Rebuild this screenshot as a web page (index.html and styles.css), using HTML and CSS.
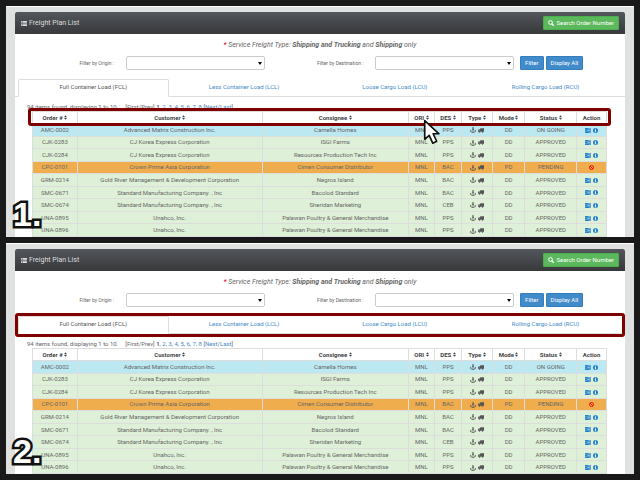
FILE: index.html
```html
<!DOCTYPE html>
<html lang="en">
<head>
<meta charset="utf-8">
<title>Freight Plan List</title>
<link rel="stylesheet" href="styles.css">
</head>
<body>
<svg class="defs" aria-hidden="true">
  <symbol id="list" viewBox="0 0 14 12"><path d="M0 0h3v2.4H0zM4 0h10v2.4H4zM0 3.2h3v2.4H0zM4 3.2h10v2.4H4zM0 6.4h3v2.4H0zM4 6.4h10v2.4H4zM0 9.6h3V12H0zM4 9.6h10V12H4z"/></symbol>
  <symbol id="search" viewBox="0 0 12 12"><circle cx="5" cy="5" r="3.8" fill="none" stroke="currentColor" stroke-width="2"/><path d="M8 8l3 3" stroke="currentColor" stroke-width="2.4" stroke-linecap="round"/></symbol>
  <symbol id="sort" viewBox="0 0 8 12"><path d="M4 0l4 5H0zM4 12l4-5H0z"/></symbol>
  <symbol id="anchor" viewBox="0 0 14 14"><path d="M7 4v9M4.500 6h5M1 8.500C1.500 11.500 4 13 7 13s5.500-1.500 6-4.500M.5 10.500L1 8l2.500 1.500M13.500 10.500L13 8l-2.500 1.500" fill="none" stroke="currentColor" stroke-width="1.700"/><circle cx="7" cy="2.500" r="1.600" fill="none" stroke="currentColor" stroke-width="1.500"/></symbol>
  <symbol id="truck" viewBox="0 0 16 12"><path d="M6 0h10v9H0V5l2.500-3H6zM1.500 5.500H5V3.300H3z" fill-rule="evenodd"/><circle cx="4" cy="10" r="2"/><circle cx="12" cy="10" r="2"/></symbol>
  <symbol id="tasks" viewBox="0 0 14 12"><path d="M0 0h14v3.400H0zM0 4.300h14v3.400H0zM0 8.600h14V12H0z"/><path d="M8 1.200h5v1H8zM5 5.500h8v1H5zM10 9.800h3v1h-3z" fill="#dff0d8"/></symbol>
  <symbol id="info" viewBox="0 0 12 12"><circle cx="6" cy="6" r="6"/><path d="M5 2h2v2H5zM4.300 5H7v4h.8v1H4.300V9H5V6h-.7z" fill="#fff"/></symbol>
  <symbol id="ban" viewBox="0 0 12 12"><circle cx="6" cy="6" r="4.800" fill="none" stroke="currentColor" stroke-width="2.200"/><path d="M2.500 2.500l7 7" stroke="currentColor" stroke-width="2.200"/></symbol>
</svg>

<main class="shots">
<section class="shot">
  <div class="card">
    <header class="bar">
      <h1><svg class="i-list"><use href="#list"/></svg>Freight Plan List</h1>
      <button class="btn green"><svg class="i-search"><use href="#search"/></svg>Search Order Number</button>
    </header>
    <p class="note"><span class="star">*</span> Service Freight Type: <b>Shipping and Trucking</b> and <b>Shipping</b> only</p>
    <form class="filters">
      <label for="origin1">Filter by Origin :</label>
      <span class="pick"><select id="origin1"><option></option></select></span>
      <label for="dest1">Filter by Destination :</label>
      <span class="pick"><select id="dest1"><option></option></select></span>
      <div class="actions">
        <button type="button" class="btn">Filter</button>
        <button type="button" class="btn">Display All</button>
      </div>
    </form>
    <nav class="tabs">
      <a class="on" href="#fcl">Full Container Load (FCL)</a>
      <a href="#lcl">Less Container Load (LCL)</a>
      <a href="#lcu">Loose Cargo Load (LCU)</a>
      <a href="#rcu">Rolling Cargo Load (RCU)</a>
    </nav>
    <p class="pages"><span class="found">94 items found, displaying 1 to 10.</span><span>[First/Prev] <b>1</b>, <a href="#p2">2</a>, <a href="#p3">3</a>, <a href="#p4">4</a>, <a href="#p5">5</a>, <a href="#p6">6</a>, <a href="#p7">7</a>, <a href="#p8">8</a> [<a href="#next">Next</a>/<a href="#last">Last</a>]</span></p>
    <div class="grid">
      <table>
        <colgroup><col class="c-order"><col class="c-customer"><col class="c-consignee"><col class="c-ori"><col class="c-des"><col class="c-type"><col class="c-mode"><col class="c-status"><col class="c-action"></colgroup>
        <thead><tr><th>Order # <svg class="i-sort"><use href="#sort"/></svg></th><th>Customer <svg class="i-sort"><use href="#sort"/></svg></th><th>Consignee <svg class="i-sort"><use href="#sort"/></svg></th><th>ORI <svg class="i-sort"><use href="#sort"/></svg></th><th>DES <svg class="i-sort"><use href="#sort"/></svg></th><th>Type <svg class="i-sort"><use href="#sort"/></svg></th><th>Mode <svg class="i-sort"><use href="#sort"/></svg></th><th>Status <svg class="i-sort"><use href="#sort"/></svg></th><th>Action</th></tr></thead>
        <tbody>
        <tr class="going"><td>AMC-0002</td><td>Advanced Matrix Construction Inc.</td><td>Camella Homes</td><td>MNL</td><td>PPS</td><td><svg class="i-anchor"><use href="#anchor"/></svg> <svg class="i-truck"><use href="#truck"/></svg></td><td>DD</td><td>ON GOING</td><td class="act"><svg class="i-tasks"><use href="#tasks"/></svg> <svg class="i-info"><use href="#info"/></svg></td></tr>
        <tr><td>CJK-0283</td><td>CJ Korea Express Corporation</td><td>ISGI Farms</td><td>MNL</td><td>PPS</td><td><svg class="i-anchor"><use href="#anchor"/></svg> <svg class="i-truck"><use href="#truck"/></svg></td><td>DD</td><td>APPROVED</td><td class="act"><svg class="i-tasks"><use href="#tasks"/></svg> <svg class="i-info"><use href="#info"/></svg></td></tr>
        <tr><td>CJK-0284</td><td>CJ Korea Express Corporation</td><td>Resources Production Tech Inc</td><td>MNL</td><td>PPS</td><td><svg class="i-anchor"><use href="#anchor"/></svg> <svg class="i-truck"><use href="#truck"/></svg></td><td>DD</td><td>APPROVED</td><td class="act"><svg class="i-tasks"><use href="#tasks"/></svg> <svg class="i-info"><use href="#info"/></svg></td></tr>
        <tr class="pending"><td>CPC-0101</td><td>Crown Prime Asia Corporation</td><td>Cimen Consumer Distributor</td><td>MNL</td><td>BAC</td><td><svg class="i-anchor"><use href="#anchor"/></svg> <svg class="i-truck"><use href="#truck"/></svg></td><td>PD</td><td>PENDING</td><td class="stop"><svg class="i-ban"><use href="#ban"/></svg></td></tr>
        <tr><td>GRM-0214</td><td>Gold River Management &amp; Development Corporation</td><td>Negros Island</td><td>MNL</td><td>BAC</td><td><svg class="i-anchor"><use href="#anchor"/></svg> <svg class="i-truck"><use href="#truck"/></svg></td><td>DD</td><td>APPROVED</td><td class="act"><svg class="i-tasks"><use href="#tasks"/></svg> <svg class="i-info"><use href="#info"/></svg></td></tr>
        <tr><td>SMC-0671</td><td>Standard Manufacturing Company. , Inc</td><td>Bacolod Standard</td><td>MNL</td><td>BAC</td><td><svg class="i-anchor"><use href="#anchor"/></svg> <svg class="i-truck"><use href="#truck"/></svg></td><td>DD</td><td>APPROVED</td><td class="act"><svg class="i-tasks"><use href="#tasks"/></svg> <svg class="i-info"><use href="#info"/></svg></td></tr>
        <tr><td>SMC-0674</td><td>Standard Manufacturing Company. , Inc</td><td>Sheridan Marketing</td><td>MNL</td><td>CEB</td><td><svg class="i-anchor"><use href="#anchor"/></svg> <svg class="i-truck"><use href="#truck"/></svg></td><td>DD</td><td>APPROVED</td><td class="act"><svg class="i-tasks"><use href="#tasks"/></svg> <svg class="i-info"><use href="#info"/></svg></td></tr>
        <tr><td>UNA-0895</td><td>Unahco, Inc.</td><td>Palawan Poultry &amp; General Merchandise</td><td>MNL</td><td>PPS</td><td><svg class="i-anchor"><use href="#anchor"/></svg> <svg class="i-truck"><use href="#truck"/></svg></td><td>DD</td><td>APPROVED</td><td class="act"><svg class="i-tasks"><use href="#tasks"/></svg> <svg class="i-info"><use href="#info"/></svg></td></tr>
        <tr><td>UNA-0896</td><td>Unahco, Inc.</td><td>Palawan Poultry &amp; General Merchandise</td><td>MNL</td><td>PPS</td><td><svg class="i-anchor"><use href="#anchor"/></svg> <svg class="i-truck"><use href="#truck"/></svg></td><td>DD</td><td>APPROVED</td><td class="act"><svg class="i-tasks"><use href="#tasks"/></svg> <svg class="i-info"><use href="#info"/></svg></td></tr>
        </tbody>
      </table>
      <div class="mark mark-head"></div>
      <svg class="cursor" viewBox="0 0 17 25"><path d="M1.500 1.500v18l4.300-3.800 3.400 7.500 3.800-1.800-3.400-7.200h5.600z" fill="#fff" stroke="#111" stroke-width="1.600" stroke-linejoin="round"/></svg>
    </div>
  </div>
  <span class="step">1.</span>
</section>

<section class="shot">
  <div class="card">
    <header class="bar">
      <h1><svg class="i-list"><use href="#list"/></svg>Freight Plan List</h1>
      <button class="btn green"><svg class="i-search"><use href="#search"/></svg>Search Order Number</button>
    </header>
    <p class="note"><span class="star">*</span> Service Freight Type: <b>Shipping and Trucking</b> and <b>Shipping</b> only</p>
    <form class="filters">
      <label for="origin2">Filter by Origin :</label>
      <span class="pick"><select id="origin2"><option></option></select></span>
      <label for="dest2">Filter by Destination :</label>
      <span class="pick"><select id="dest2"><option></option></select></span>
      <div class="actions">
        <button type="button" class="btn">Filter</button>
        <button type="button" class="btn">Display All</button>
      </div>
    </form>
    <nav class="tabs">
      <a class="on" href="#fcl">Full Container Load (FCL)</a>
      <a href="#lcl">Less Container Load (LCL)</a>
      <a href="#lcu">Loose Cargo Load (LCU)</a>
      <a href="#rcu">Rolling Cargo Load (RCU)</a>
      <span class="mark mark-tabs"></span>
    </nav>
    <p class="pages"><span class="found">94 items found, displaying 1 to 10.</span><span>[First/Prev] <b>1</b>, <a href="#p2">2</a>, <a href="#p3">3</a>, <a href="#p4">4</a>, <a href="#p5">5</a>, <a href="#p6">6</a>, <a href="#p7">7</a>, <a href="#p8">8</a> [<a href="#next">Next</a>/<a href="#last">Last</a>]</span></p>
    <div class="grid">
      <table>
        <colgroup><col class="c-order"><col class="c-customer"><col class="c-consignee"><col class="c-ori"><col class="c-des"><col class="c-type"><col class="c-mode"><col class="c-status"><col class="c-action"></colgroup>
        <thead><tr><th>Order # <svg class="i-sort"><use href="#sort"/></svg></th><th>Customer <svg class="i-sort"><use href="#sort"/></svg></th><th>Consignee <svg class="i-sort"><use href="#sort"/></svg></th><th>ORI <svg class="i-sort"><use href="#sort"/></svg></th><th>DES <svg class="i-sort"><use href="#sort"/></svg></th><th>Type <svg class="i-sort"><use href="#sort"/></svg></th><th>Mode <svg class="i-sort"><use href="#sort"/></svg></th><th>Status <svg class="i-sort"><use href="#sort"/></svg></th><th>Action</th></tr></thead>
        <tbody>
        <tr class="going"><td>AMC-0002</td><td>Advanced Matrix Construction Inc.</td><td>Camella Homes</td><td>MNL</td><td>PPS</td><td><svg class="i-anchor"><use href="#anchor"/></svg> <svg class="i-truck"><use href="#truck"/></svg></td><td>DD</td><td>ON GOING</td><td class="act"><svg class="i-tasks"><use href="#tasks"/></svg> <svg class="i-info"><use href="#info"/></svg></td></tr>
        <tr><td>CJK-0283</td><td>CJ Korea Express Corporation</td><td>ISGI Farms</td><td>MNL</td><td>PPS</td><td><svg class="i-anchor"><use href="#anchor"/></svg> <svg class="i-truck"><use href="#truck"/></svg></td><td>DD</td><td>APPROVED</td><td class="act"><svg class="i-tasks"><use href="#tasks"/></svg> <svg class="i-info"><use href="#info"/></svg></td></tr>
        <tr><td>CJK-0284</td><td>CJ Korea Express Corporation</td><td>Resources Production Tech Inc</td><td>MNL</td><td>PPS</td><td><svg class="i-anchor"><use href="#anchor"/></svg> <svg class="i-truck"><use href="#truck"/></svg></td><td>DD</td><td>APPROVED</td><td class="act"><svg class="i-tasks"><use href="#tasks"/></svg> <svg class="i-info"><use href="#info"/></svg></td></tr>
        <tr class="pending"><td>CPC-0101</td><td>Crown Prime Asia Corporation</td><td>Cimen Consumer Distributor</td><td>MNL</td><td>BAC</td><td><svg class="i-anchor"><use href="#anchor"/></svg> <svg class="i-truck"><use href="#truck"/></svg></td><td>PD</td><td>PENDING</td><td class="stop"><svg class="i-ban"><use href="#ban"/></svg></td></tr>
        <tr><td>GRM-0214</td><td>Gold River Management &amp; Development Corporation</td><td>Negros Island</td><td>MNL</td><td>BAC</td><td><svg class="i-anchor"><use href="#anchor"/></svg> <svg class="i-truck"><use href="#truck"/></svg></td><td>DD</td><td>APPROVED</td><td class="act"><svg class="i-tasks"><use href="#tasks"/></svg> <svg class="i-info"><use href="#info"/></svg></td></tr>
        <tr><td>SMC-0671</td><td>Standard Manufacturing Company. , Inc</td><td>Bacolod Standard</td><td>MNL</td><td>BAC</td><td><svg class="i-anchor"><use href="#anchor"/></svg> <svg class="i-truck"><use href="#truck"/></svg></td><td>DD</td><td>APPROVED</td><td class="act"><svg class="i-tasks"><use href="#tasks"/></svg> <svg class="i-info"><use href="#info"/></svg></td></tr>
        <tr><td>SMC-0674</td><td>Standard Manufacturing Company. , Inc</td><td>Sheridan Marketing</td><td>MNL</td><td>CEB</td><td><svg class="i-anchor"><use href="#anchor"/></svg> <svg class="i-truck"><use href="#truck"/></svg></td><td>DD</td><td>APPROVED</td><td class="act"><svg class="i-tasks"><use href="#tasks"/></svg> <svg class="i-info"><use href="#info"/></svg></td></tr>
        <tr><td>UNA-0895</td><td>Unahco, Inc.</td><td>Palawan Poultry &amp; General Merchandise</td><td>MNL</td><td>PPS</td><td><svg class="i-anchor"><use href="#anchor"/></svg> <svg class="i-truck"><use href="#truck"/></svg></td><td>DD</td><td>APPROVED</td><td class="act"><svg class="i-tasks"><use href="#tasks"/></svg> <svg class="i-info"><use href="#info"/></svg></td></tr>
        <tr><td>UNA-0896</td><td>Unahco, Inc.</td><td>Palawan Poultry &amp; General Merchandise</td><td>MNL</td><td>PPS</td><td><svg class="i-anchor"><use href="#anchor"/></svg> <svg class="i-truck"><use href="#truck"/></svg></td><td>DD</td><td>APPROVED</td><td class="act"><svg class="i-tasks"><use href="#tasks"/></svg> <svg class="i-info"><use href="#info"/></svg></td></tr>
        </tbody>
      </table>
    </div>
  </div>
  <span class="step">2.</span>
</section>
</main>
</body>
</html>
```
FILE: styles.css
```css
* { box-sizing: border-box; }

body {
  margin: 0;
  background: #191919;
  color: #666;
  font-family: Roboto, "Liberation Sans", sans-serif;
  font-size: 6px;
  line-height: 8px;
}

p, h1 { margin: 0; }
svg { fill: currentColor; vertical-align: middle; }
a { color: #428bca; text-decoration: none; }
button, select { font: inherit; }

.defs { position: absolute; width: 0; height: 0; }

.shots {
  display: flex;
  flex-direction: column;
  gap: 6px;
  padding: 6px;
}

.shot {
  position: relative;
  padding: 5px 9px 0;
  border-top: 1px solid #fff;
  background: #dfe1e0;
  overflow: hidden;
}

.card { background: #fff; }

.bar {
  display: flex;
  align-items: center;
  justify-content: space-between;
  height: 22px;
  padding: 0 6px;
  border-radius: 2px 2px 0 0;
  background: linear-gradient(#53575c, #37383a);
  color: #ddd;
}

.bar h1 {
  display: flex;
  align-items: center;
  gap: 2px;
  font-size: 7px;
  font-weight: 400;
}

.btn {
  display: flex;
  align-items: center;
  justify-content: center;
  gap: 2px;
  height: 14px;
  padding: 0 4px;
  border: 1px solid #357ebd;
  border-radius: 1px;
  background: #428bca;
  color: #fff;
}

.green { border-color: #4cae4c; background: #5cb85c; }

.note {
  padding: 7px 0;
  font-size: 7px;
  font-style: italic;
  text-align: center;
}

.star { color: #e00; }

.filters {
  display: grid;
  grid-template-columns: 4fr 5fr 4fr 5fr 4fr;
  align-items: center;
}

.filters label {
  padding-right: 12px;
  font-size: 5px;
  text-align: right;
}

.actions { display: flex; gap: 2px; padding-left: 6px; }

.pick { position: relative; }

.pick::after {
  content: "";
  position: absolute;
  right: 3px;
  top: 6px;
  border: 2px solid transparent;
  border-top: 3px solid #000;
  border-bottom: 0;
}

.pick select {
  display: block;
  width: 100%;
  height: 14px;
  padding: 0 4px;
  border: 1px solid #ccc;
  border-radius: 2px;
  background: #fff;
  appearance: none;
}

.tabs {
  position: relative;
  display: grid;
  grid-template-columns: repeat(4, 1fr);
  margin-top: 9px;
  padding: 0 4px 0 3px;
  border-bottom: 1px solid #ddd;
}

.tabs a {
  padding: 4px 0 5px;
  text-align: center;
}

.tabs .on {
  margin-bottom: -1px;
  border: 1px solid #ddd;
  border-bottom-color: #fff;
  border-radius: 2px 2px 0 0;
  padding: 3px 0 5px;
  background: #fff;
  color: #555;
}

.pages {
  display: flex;
  gap: 7px;
  padding: 6px 12px 0;
}

.grid { position: relative; margin: 0 18px 0 17px; }

table {
  width: 100%;
  height: 126px;
  border-collapse: collapse;
  table-layout: fixed;
}

th, td {
  height: 12px;
  padding: 0;
  border: 1px solid #ddd;
  text-align: center;
  white-space: nowrap;
}

th { background: #fff; color: #444; font-weight: 700; }
td { background: #dff0d8; }
.going td { background: #bce8f1; }
.pending td { background: #f0ad4e; }

.c-order { width: 7.8%; }
.c-customer { width: 32.2%; }
.c-consignee { width: 25.5%; }
.c-ori { width: 4.5%; }
.c-des { width: 4.8%; }
.c-type { width: 5.3%; }
.c-mode { width: 5.7%; }
.c-status { width: 9%; }
.c-action { width: 5.2%; }

td svg { color: #555; }
td svg + svg { margin-left: 1px; }
.act svg { color: #1f7fd0; }
.stop svg { color: #f00; }

.i-list { width: 6px; height: 5px; }
.i-search { width: 6px; height: 6px; }
.i-sort { width: 3px; height: 5px; }
.i-anchor { width: 6px; height: 6px; }
.i-truck { width: 6px; height: 5px; }
.i-tasks { width: 6px; height: 5px; }
.i-info, .i-ban { width: 5px; height: 5px; }

.mark {
  position: absolute;
  border: 3px solid #800000;
  border-radius: 3px;
  pointer-events: none;
}

.mark-head { top: -3px; left: -4px; right: -4px; height: 18px; }
.mark-tabs { inset: -3px 0 -4px; }

.cursor {
  position: absolute;
  top: 8px;
  left: 68%;
  width: 18px;
  height: 26px;
}

.step {
  position: absolute;
  left: 7px;
  bottom: 4px;
  color: #fff;
  font: 700 34px/38px "Liberation Sans", sans-serif;
  -webkit-text-stroke: 5px #111;
  paint-order: stroke fill;
}
```
